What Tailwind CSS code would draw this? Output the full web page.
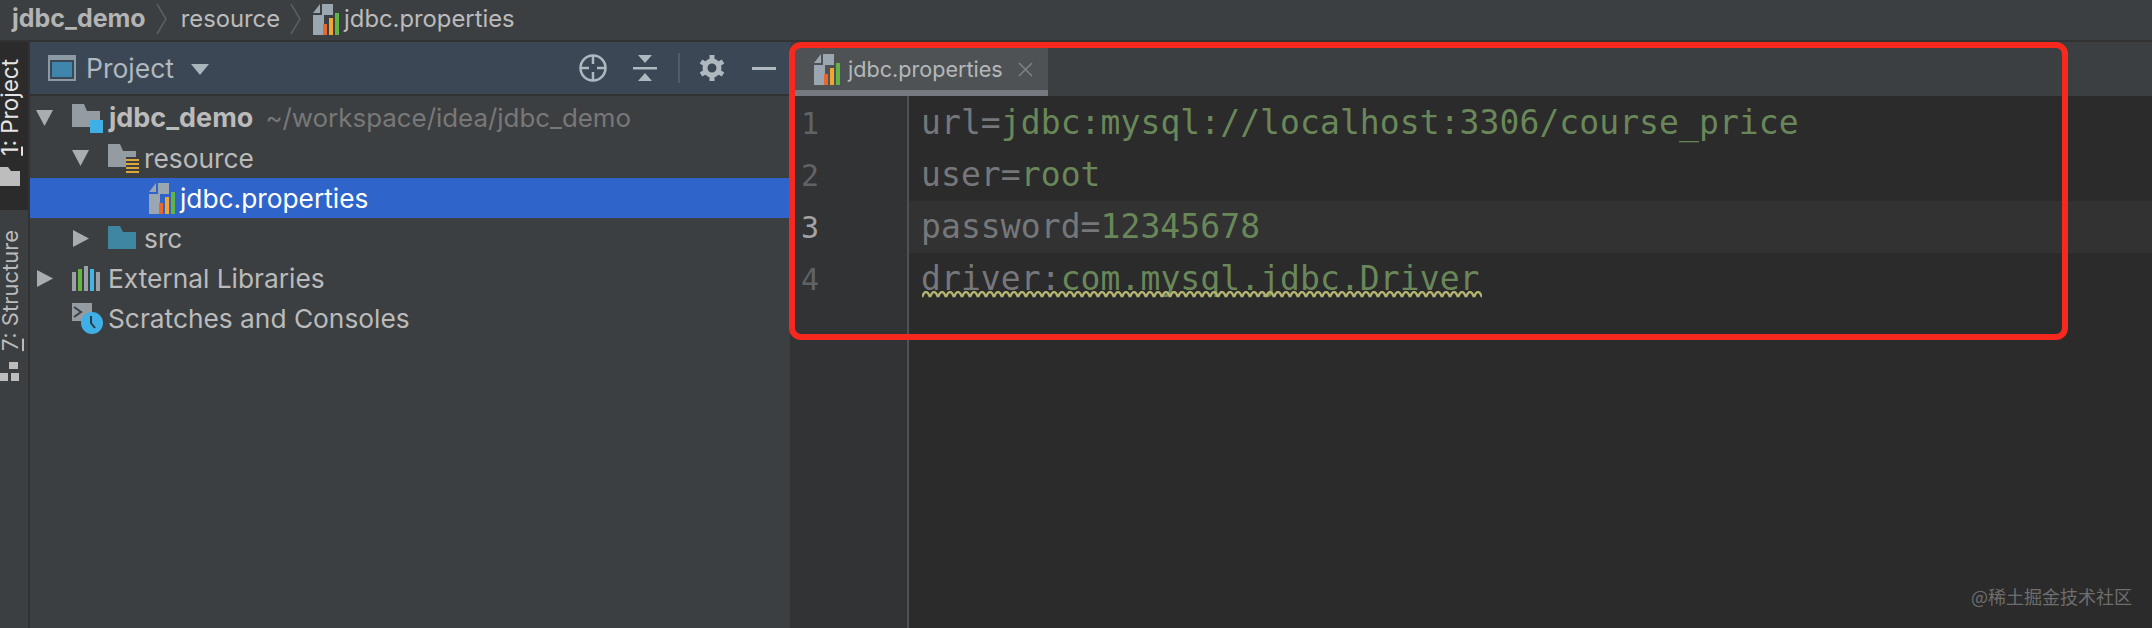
<!DOCTYPE html>
<html>
  <head>
    <meta charset="UTF-8" />
    <title>jdbc.properties</title>
    <script src="https://cdn.jsdelivr.net/npm/@tailwindcss/browser@4"></script>
  </head>
  <body class="bg-[#3c3f41]">
    <div class="relative flex flex-col w-[2152px] h-[628px] overflow-hidden font-['Inter','Liberation_Sans',sans-serif] text-[#bbbbbb]">
      <!-- Breadcrumb -->
      <div class="flex items-center h-[42px] shrink-0 pb-[2px] bg-[#3c3f41] border-b-2 border-[#323232] text-[23.8px]">
        <span class="ml-[12px] font-bold text-[25px] text-[#b4b4b4]">jdbc_demo</span>
        <svg class="ml-[10px]" width="12" height="32" viewBox="0 0 12 32" fill="none" stroke="#5c5f61" stroke-width="1.5"><path d="M1 1 L10 16 L1 31" /></svg>
        <span class="ml-[13px]">resource</span>
        <svg class="ml-[10px]" width="12" height="32" viewBox="0 0 12 32" fill="none" stroke="#5c5f61" stroke-width="1.5"><path d="M1 1 L10 16 L1 31" /></svg>
        <svg class="ml-[11px]" width="27" height="31" viewBox="0 0 27 31"><path d="M0 9 L7 0 V9 Z" fill="#9aa7b0" /><path d="M9 0 H20 V11 H11 V31 H0 V11 H9 Z" fill="#9aa7b0" /><rect x="10" y="20" width="4" height="11" fill="#e8672c" /><rect x="16" y="14" width="4" height="17" fill="#f0a732" /><rect x="22" y="9" width="4" height="22" fill="#62b543" /></svg>
        <span class="ml-[4px]">jdbc.properties</span>
      </div>

      <div class="flex flex-1 min-h-0">
        <!-- Left tool stripe -->
        <div class="w-[30px] shrink-0 flex flex-col border-r-2 border-[#323232] text-[22.5px]">
          <div class="h-[168px] flex flex-col items-start bg-[#2b2b2b] pt-[17px] text-[#e4e4e4]">
            <span class="[writing-mode:vertical-rl] rotate-180 leading-[24px] -ml-[2px]"><span class="underline">1</span>: Project</span>
            <svg class="mt-[11px]" width="20" height="19" viewBox="0 0 20 19" fill="#bdbdbd"><path d="M0 0 H8 L11 4 H20 V19 H0 Z" /></svg>
          </div>
          <div class="flex flex-col items-start pt-[20px]">
            <span class="[writing-mode:vertical-rl] rotate-180 leading-[24px] -ml-[2px] text-[22px]"><span class="underline">7</span>: Structure</span>
            <svg class="mt-[11px]" width="20" height="20" viewBox="0 0 20 20" fill="#bdbdbd"><rect x="9" y="0" width="9" height="7" /><rect x="0" y="11" width="8" height="8" /><rect x="11" y="11" width="8" height="8" /></svg>
          </div>
        </div>

        <!-- Project panel -->
        <div class="w-[760px] shrink-0 flex flex-col bg-[#3c3f41]">
          <div class="h-[54px] shrink-0 flex items-center bg-[#3b4754] border-b-2 border-[#323232] text-[#b0b8c0] text-[26.5px]">
            <svg class="ml-[18px]" width="28" height="26" viewBox="0 0 28 26"><rect x="1" y="1" width="26" height="24" fill="none" stroke="#8c9aa6" stroke-width="2" /><rect x="1" y="1" width="26" height="4" fill="#8c9aa6" /><rect x="4" y="7" width="20" height="15" fill="#3f86ad" /></svg>
            <span class="ml-[10px] mt-[2px]">Project</span>
            <svg class="ml-[17px] mt-[2px]" width="18" height="11" viewBox="0 0 18 11" fill="#a9b4bd"><path d="M0 0 H18 L9 11 Z" /></svg>
            <div class="ml-auto flex items-center">
              <svg width="28" height="28" viewBox="0 0 28 28" fill="none" stroke="#afb8bf" stroke-width="2.5"><circle cx="14" cy="14" r="12.5" /><path d="M14 1 V10 M14 18 V27 M1 14 H10 M18 14 H27" /></svg>
              <svg class="ml-[26px]" width="24" height="26" viewBox="0 0 24 26" fill="#afb8bf"><path d="M5 0 H19 L12 8 Z M5 26 H19 L12 18 Z" /><rect x="0" y="12" width="24" height="2.5" /></svg>
              <div class="ml-[21px] w-[2px] h-[30px] bg-[#4f5b66]"></div>
              <svg class="ml-[20px]" width="24" height="26" viewBox="0 0 24 26"><circle cx="12" cy="13" r="7" fill="none" stroke="#afb8bf" stroke-width="5" /><path d="M12 0 V5 M12 21 V26 M1 6.5 L5 9 M19 17 L23 19.5 M1 19.5 L5 17 M19 9 L23 6.5" stroke="#afb8bf" stroke-width="5" /></svg>
              <div class="ml-[28px] mr-[14px] w-[24px] h-[3px] bg-[#afb8bf]"></div>
            </div>
          </div>
          <div class="pt-[2px] text-[26.3px]">
            <div class="flex items-center h-[40px]">
              <svg class="ml-[6px]" width="17" height="16" viewBox="0 0 17 16" fill="#a9adb0"><path d="M0 0 H17 L8.5 16 Z" /></svg>
              <svg class="ml-[19px]" width="31" height="29" viewBox="0 0 31 29"><path d="M0 0 H12 L15 7 H28 V23 H0 Z" fill="#949ca2" /><rect x="18" y="16" width="13" height="13" fill="#3fb0e6" /></svg>
              <span class="ml-[6px] font-bold text-[27px] mt-[1px]">jdbc_demo</span>
              <span class="ml-[12px] text-[#787878] text-[25.9px] mt-[1px]">~/workspace/idea/jdbc_demo</span>
            </div>
            <div class="flex items-center h-[40px]">
              <svg class="ml-[42px]" width="17" height="16" viewBox="0 0 17 16" fill="#a9adb0"><path d="M0 0 H17 L8.5 16 Z" /></svg>
              <svg class="ml-[19px]" width="31" height="29" viewBox="0 0 31 29"><path d="M0 0 H12 L15 7 H28 V23 H0 Z" fill="#949ca2" /><rect x="18" y="13" width="13" height="16" fill="#3c3f41" /><path d="M18 15 H31 V17 H18 Z M18 19 H31 V21 H18 Z M18 23 H31 V25 H18 Z M18 27 H31 V29 H18 Z" fill="#dba63c" /></svg>
              <span class="ml-[5px] mt-[1px]">resource</span>
            </div>
            <div class="flex items-center h-[40px] bg-[#2f65ca] text-white">
              <svg class="ml-[119px]" width="27" height="31" viewBox="0 0 27 31"><path d="M0 9 L7 0 V9 Z" fill="#9aa7b0" /><path d="M9 0 H20 V11 H11 V31 H0 V11 H9 Z" fill="#9aa7b0" /><rect x="10" y="20" width="4" height="11" fill="#e8672c" /><rect x="16" y="14" width="4" height="17" fill="#f0a732" /><rect x="22" y="9" width="4" height="22" fill="#62b543" /></svg>
              <span class="ml-[4px] mt-[1px]">jdbc.properties</span>
            </div>
            <div class="flex items-center h-[40px]">
              <svg class="ml-[43px]" width="16" height="17" viewBox="0 0 16 17" fill="#a9adb0"><path d="M0 0 L16 8.5 L0 17 Z" /></svg>
              <svg class="ml-[19px]" width="28" height="24" viewBox="0 0 28 24"><path d="M0 0 H12 L15 6 H28 V23 H0 Z" fill="#3f86a3" /></svg>
              <span class="ml-[8px] mt-[1px]">src</span>
            </div>
            <div class="flex items-center h-[40px]">
              <svg class="ml-[7px]" width="16" height="17" viewBox="0 0 16 17" fill="#a9adb0"><path d="M0 0 L16 8.5 L0 17 Z" /></svg>
              <svg class="ml-[19px]" width="28" height="25" viewBox="0 0 28 25"><rect x="0" y="6" width="4" height="19" fill="#9aa0a4" /><rect x="6" y="3" width="4" height="22" fill="#62b543" /><rect x="12" y="0" width="4" height="25" fill="#9aa0a4" /><rect x="18" y="3" width="4" height="22" fill="#40b6e0" /><rect x="24" y="6" width="4" height="19" fill="#9aa0a4" /></svg>
              <span class="ml-[8px] mt-[1px]">External Libraries</span>
            </div>
            <div class="flex items-center h-[40px]">
              <svg class="ml-[42px]" width="31" height="31" viewBox="0 0 31 31"><rect x="0" y="0" width="20" height="18" fill="#949ca2" /><path d="M2 4 L9 9 L2 14" fill="none" stroke="#3c3f41" stroke-width="2" /><circle cx="20" cy="20" r="11" fill="#3fb0e6" /><path d="M19 13 V20 L23 25" fill="none" stroke="#2b3a44" stroke-width="2" /></svg>
              <span class="ml-[5px] mt-[1px]">Scratches and Consoles</span>
            </div>
          </div>
        </div>

        <!-- Editor -->
        <div class="flex-1 min-w-0 flex flex-col bg-[#2b2b2b]">
          <div class="h-[54px] shrink-0 flex items-stretch bg-[#3c3f41]">
            <div class="w-[258px] pl-[24px] mt-[6px] flex items-center bg-[#4e5254] border-b-[6px] border-[#747a80] text-[21.6px] text-[#b4b8ba]">
              <svg width="27" height="31" viewBox="0 0 27 31"><path d="M0 9 L7 0 V9 Z" fill="#9aa7b0" /><path d="M9 0 H20 V11 H11 V31 H0 V11 H9 Z" fill="#9aa7b0" /><rect x="10" y="20" width="4" height="11" fill="#e8672c" /><rect x="16" y="14" width="4" height="17" fill="#f0a732" /><rect x="22" y="9" width="4" height="22" fill="#62b543" /></svg>
              <span class="ml-[7px]">jdbc.properties</span>
              <svg class="ml-[15px]" width="15" height="15" viewBox="0 0 15 15" stroke="#7d8285" stroke-width="1.5"><path d="M1 1 L14 14 M14 1 L1 14" /></svg>
            </div>
          </div>
          <div class="flex flex-1 min-h-0 font-['DejaVu_Sans_Mono','Liberation_Mono',monospace] text-[33px] tracking-[0.08px] leading-[52px]">
            <div class="w-[119px] shrink-0 bg-[#313335] border-r-2 border-[#4f5254] pl-[11px] pt-[2px] text-[#606366] text-[30px]">
              <div>1</div>
              <div>2</div>
              <div class="text-[#a4a3a3]">3</div>
              <div>4</div>
            </div>
            <div class="flex-1 pt-[1px] text-[#75777b]">
              <div class="pl-[12px]">url=<span class="text-[#6a8759]">jdbc:mysql://localhost:3306/course_price</span></div>
              <div class="pl-[12px]">user=<span class="text-[#6a8759]">root</span></div>
              <div class="pl-[12px] bg-[#323232]">password=<span class="text-[#6a8759]">12345678</span></div>
              <div class="pl-[12px]">driver:<span class="text-[#6a8759]">com.mysql.jdbc.Driver</span></div>
            </div>
          </div>
        </div>
      </div>

      <!-- Weak warning squiggle under the driver line -->
      <svg class="absolute left-[922px] top-[291px]" width="560" height="8" viewBox="0 0 560 8">
        <defs>
          <pattern id="squiggle" width="8" height="8" patternUnits="userSpaceOnUse">
            <path d="M0 6 Q2 1 4 1 Q6 1 8 6" fill="none" stroke="#b3b372" stroke-width="2.4" />
          </pattern>
        </defs>
        <rect width="560" height="8" fill="url(#squiggle)" />
      </svg>
      <!-- Red annotation frame -->
      <div class="absolute left-[789px] top-[42px] w-[1279px] h-[298px] border-[6px] border-[#f7291f] rounded-[12px]"></div>
      <!-- Watermark -->
      <div class="absolute right-[20px] bottom-[18px] text-[18px] text-[#6e6e6e] font-['Noto_Sans_CJK_SC',sans-serif]">@稀土掘金技术社区</div>
    </div>
  </body>
</html>
